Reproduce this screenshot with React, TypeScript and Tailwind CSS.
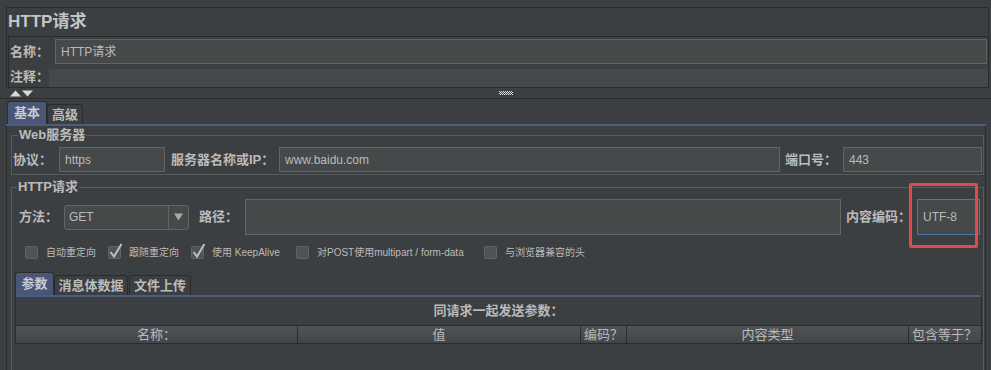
import React from 'react';

const FONT = { fontFamily: '"Liberation Sans", "Noto Sans CJK SC", sans-serif' };

const Checkbox: React.FC<{ checked?: boolean }> = ({ checked }) => (
  <span className="relative inline-block w-[13px] h-[13px] shrink-0 rounded-[2px] border border-[#606365] bg-[#505355]">
    {checked && (
      <svg className="absolute -left-[1px] -top-[5px]" width="16" height="18" viewBox="0 0 16 18">
        <polyline points="2.5,10 6,14.5 13.5,2" fill="none" stroke="#bfbfbf" strokeWidth="2" />
      </svg>
    )}
  </span>
);

const Field: React.FC<{ className?: string; value?: string }> = ({ className = '', value }) => (
  <div className={`h-[25px] border border-[#646464] bg-[#45494a] text-[12px] text-[#bbbbbb] flex items-center px-[5px] ${className}`}>
    {value}
  </div>
);

const Label: React.FC<{ className?: string; children: React.ReactNode }> = ({ className = '', children }) => (
  <span className={`text-[13px] font-bold text-[#bbbbbb] whitespace-nowrap ${className}`}>{children}</span>
);

export default function App() {
  const opts: { w: string; label: string; checked?: boolean }[] = [
    { w: 'w-[83px]', label: '自动重定向' },
    { w: 'w-[83px]', label: '跟随重定向', checked: true },
    { w: 'w-[105px]', label: '使用 KeepAlive', checked: true },
    { w: 'w-[188px]', label: '对POST使用multipart / form-data' },
    { w: 'w-[140px]', label: '与浏览器兼容的头' },
  ];

  const cols = [
    { w: 'w-[282px]', label: '名称：' },
    { w: 'w-[283px]', label: '值' },
    { w: 'w-[46px]', label: '编码？' },
    { w: 'w-[282px]', label: '内容类型' },
    { w: 'w-[71px]', label: '包含等于？' },
  ];

  return (
    <div className="relative w-[991px] h-[370px] overflow-hidden bg-[#3c3f41] text-[#bbbbbb]" style={FONT}>
      <div className="h-[7px]" />

      {/* header box */}
      <div className="ml-[6px] w-[983px] border-t border-x border-[#2b2b2b]">
        <div className="h-[28px] flex items-center pl-[1px] text-[17px] font-bold text-[#c4c4c4]">HTTP请求</div>
        <div className="ml-[1px] border-t border-l border-b border-[#2b2b2b]">
          <div className="h-[29px] flex items-center">
            <Label className="w-[46px] pl-[1px]">名称：</Label>
            <Field className="flex-1 mr-[1px] h-[25px]" value="HTTP请求" />
          </div>
          <div className="h-[21px] flex items-end">
            <Label className="w-[40px] pl-[1px] self-center">注释：</Label>
            <div className="flex-1 h-[18px] bg-[#45494a]" />
          </div>
        </div>
      </div>

      {/* splitter */}
      <div className="h-[11px] flex items-center border-b border-[#2b2b2b]">
        <svg className="ml-[10px]" width="24" height="7" viewBox="0 0 24 7">
          <polygon points="0,6.5 5.5,0.5 11,6.5" fill="#d8d8d8" />
          <polygon points="12,0.5 23,0.5 17.5,6.5" fill="#d8d8d8" />
        </svg>
        <svg className="ml-[465px]" width="14" height="4" viewBox="0 0 14 4">
          {[0, 2, 4, 6, 8, 10, 12].map((x) => (
            <React.Fragment key={x}>
              <rect x={x} y={0} width="1" height="1" fill="#e0e0e0" />
              <rect x={x + 1} y={1} width="1" height="1" fill="#e0e0e0" />
              <rect x={x} y={2} width="1" height="1" fill="#e0e0e0" />
              <rect x={x + 1} y={3} width="1" height="1" fill="#e0e0e0" />
            </React.Fragment>
          ))}
        </svg>
      </div>

      {/* main tabs */}
      <div className="h-[25px] flex items-end pl-[7px] pt-[2px]">
        <div className="h-[23px] w-[40px] flex items-center justify-center rounded-t-[3px] border border-b-0 border-[#2b2b2b] bg-[#4a5676] text-[13px] font-bold text-[#c8cbd2]">基本</div>
        <div className="h-[20px] w-[36px] flex items-center justify-center rounded-t-[3px] border border-b-0 border-[#2b2b2b] bg-[#3c3f41] text-[13px] font-bold text-[#bbbbbb]">高级</div>
      </div>
      <div className="ml-[6px] w-[980px] h-[2px] bg-[#4b5b84]" />

      <div className="ml-[6px] w-[980px] h-[300px] border-x border-[#2b2b2b] pt-[2px]">
        {/* Web server */}
        <fieldset className="ml-[4px] mr-[1px] border border-[#585b5d] px-[1px] pb-[2px]">
          <legend className="ml-[5px] px-[1px] text-[13px] leading-[14px] font-bold text-[#bbbbbb]">Web服务器</legend>
          <div className="flex items-center pt-[5px]">
            <Label className="w-[46px]">协议：</Label>
            <Field className="w-[106px]" value="https" />
            <Label className="ml-[6px] w-[108px]">服务器名称或IP：</Label>
            <Field className="w-[501px]" value="www.baidu.com" />
            <Label className="ml-[5px] w-[58px]">端口号：</Label>
            <Field className="w-[139px]" value="443" />
          </div>
        </fieldset>

        {/* HTTP request */}
        <fieldset className="mt-[5px] ml-[4px] mr-[1px] border border-[#585b5d] h-[200px]">
          <legend className="ml-[5px] px-[1px] text-[13px] leading-[14px] font-bold text-[#bbbbbb]">HTTP请求</legend>
          <div className="flex items-center h-[36px] mt-[5px] pl-[7px]">
            <Label className="w-[45px]">方法：</Label>
            <div className="w-[125px] h-[25px] flex rounded-[3px] border border-[#646464] bg-[#45494a]">
              <div className="flex-1 flex items-center px-[4px] text-[12px] text-[#bbbbbb]">GET</div>
              <div className="w-[20px] border-l border-[#646464] flex items-center justify-center">
                <svg width="9" height="8" viewBox="0 0 9 8">
                  <polygon points="0,0.5 9,0.5 4.5,7.5" fill="#a8a8a8" />
                </svg>
              </div>
            </div>
            <Label className="ml-[10px] w-[46px]">路径：</Label>
            <div className="w-[596px] h-[36px] border border-[#646464] bg-[#45494a]" />
            <Label className="ml-[5px] w-[71px]">内容编码：</Label>
            <div className="w-[63px] h-[36px] border border-[#4b76a6] bg-[#45494a] flex items-center px-[5px] text-[12px] text-[#bbbbbb]">UTF-8</div>
          </div>

          <div className="flex items-center h-[13px] mt-[11px] pl-[13px]">
            {opts.map((o) => (
              <div key={o.label} className={`${o.w} flex items-center shrink-0`}>
                <Checkbox checked={o.checked} />
                <span className="ml-[8px] text-[10px] text-[#bbbbbb] whitespace-nowrap">{o.label}</span>
              </div>
            ))}
          </div>

          {/* inner tabs */}
          <div className="h-[23px] mt-[13px] ml-[3px] flex items-end">
            <div className="h-[23px] w-[39px] flex items-center justify-center rounded-t-[3px] border border-b-0 border-[#2b2b2b] bg-[#4a5676] text-[13px] font-bold text-[#c8cbd2]">参数</div>
            <div className="h-[20px] w-[74px] flex items-center justify-center rounded-t-[3px] border border-b-0 border-[#2b2b2b] text-[13px] font-bold text-[#bbbbbb]">消息体数据</div>
            <div className="h-[20px] w-[62px] ml-[1px] flex items-center justify-center rounded-t-[3px] border border-b-0 border-[#2b2b2b] text-[13px] font-bold text-[#bbbbbb]">文件上传</div>
          </div>
          <div className="ml-[3px] w-[967px] border-x border-[#2b2b2b]">
            <div className="h-[2px] bg-[#4b5b84]" />
            <div className="h-[28px] flex items-center justify-center">
              <Label>同请求一起发送参数：</Label>
            </div>
            <div className="flex h-[19px] border-y border-[#2b2b2b] bg-gradient-to-b from-[#505355] to-[#434648]">
              {cols.map((c, i) => (
                <div
                  key={c.label}
                  className={`${c.w} shrink-0 flex items-center justify-center text-[13px] text-[#bbbbbb] ${i < cols.length - 1 ? 'border-r border-[#2b2b2b]' : ''}`}
                >
                  {c.label}
                </div>
              ))}
            </div>
          </div>
        </fieldset>
      </div>

      {/* highlight */}
      <div className="absolute left-[909px] top-[183px] w-[69px] h-[65px] border-[3px] border-[#e5474b] rounded-[2px]" />
    </div>
  );
}
